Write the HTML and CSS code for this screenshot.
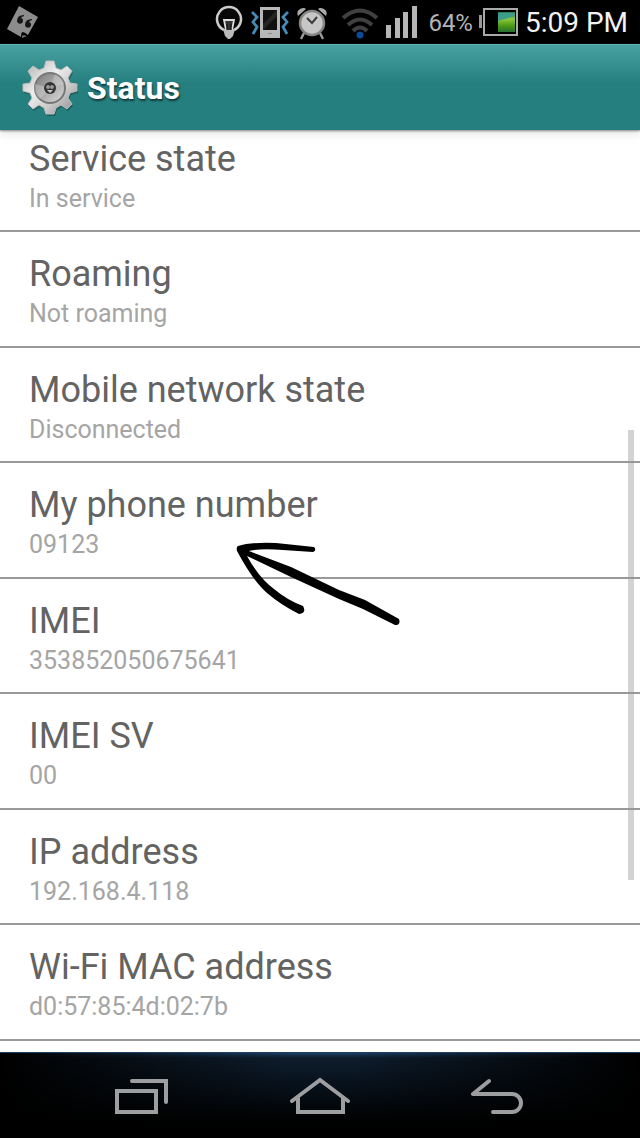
FILE: index.html
```html
<!DOCTYPE html>
<html lang="en">
<head>
<meta charset="utf-8">
<meta name="viewport" content="width=device-width, initial-scale=1">
<title>Status</title>
<link rel="stylesheet" href="styles.css">
</head>
<body>
<div class="statusbar">
  <svg class="note" width="32" height="34" viewBox="0 0 32 34" aria-hidden="true">
    <path d="M12 1 31 12 21 30Q18 27 15 27 14 29 14 32L0 24Z" fill="#8c8c8c"/>
    <path d="M15 33Q14 29 20 31Z" fill="#777"/>
    <path d="M17 10q-7 0-7 6a3 3 0 1 0 4-3q0-1 3-2ZM25 14q-7 0-7 6a3 3 0 1 0 4-3q0-1 3-2Z" fill="#161616"/>
  </svg>
  <div class="indicators">
    <svg width="28" height="36" viewBox="0 0 28 36" aria-label="Light" role="img">
      <path d="M9 26A12 12 0 1 1 19 26" fill="#080808" stroke="#ccc" stroke-width="2.500"/>
      <path d="M8 25H20L18 32 15 35H13L10 32Z" fill="#bbb"/>
      <path d="M11 26 9 16H19L17 26" fill="#333" stroke="#ddd" stroke-width="1.800"/>
      <path d="M12 20v6M16 20v6" stroke="#111" stroke-width="1"/>
    </svg>
    <svg width="38" height="36" viewBox="0 0 38 36" aria-label="Vibrate" role="img">
      <rect x="9" y="3" width="20" height="31" fill="#b8b8b8"/>
      <rect x="12" y="6" width="14" height="20" fill="#101010"/>
      <path d="M12 26V20L26 6V12Z" fill="#252525"/>
      <rect x="17" y="29" width="4" height="1" fill="#888"/>
      <path d="M1 8 6 13 2 18 6 23 2 30M37 8 32 13 36 18 32 23 36 30" fill="none" stroke="#438bb8" stroke-width="2.800"/>
    </svg>
    <svg width="30" height="36" viewBox="0 0 30 36" aria-label="Alarm" role="img">
      <path d="M7 29 4 35M23 29 26 35" stroke="#999" stroke-width="2.500"/>
      <path d="M1 12Q-1 7 3 5T9 5ZM29 12Q31 7 27 5T21 5Z" fill="#aaa"/>
      <circle cx="15" cy="19" r="12" fill="#c6c6c6" stroke="#858585" stroke-width="2.500"/>
      <path d="M10 14 15 19 20 13" fill="none" stroke="#3b3b3b" stroke-width="2"/>
    </svg>
    <svg class="wifi" width="36" height="36" viewBox="0 0 36 36" aria-label="Wi-Fi" role="img">
      <path d="M1 14Q18-1 35 14M6 21Q18 10 30 21M11 27Q18 20 25 27" fill="none" stroke="#404040" stroke-width="4"/>
      <circle cx="18" cy="31" r="3.500" fill="#0b4c98"/>
    </svg>
    <svg class="signal" width="32" height="36" viewBox="0 0 32 36" aria-label="Signal" role="img">
      <path d="M0 21h5v13H0ZM9 14h5v20H9ZM17 8h5v26h-5ZM26 2h5v32h-5Z" fill="#b6b6b6"/>
    </svg>
    <span class="percent">64%</span>
    <svg class="battery" width="40" height="30" viewBox="0 0 40 30" aria-label="Battery" role="img">
      <defs><linearGradient id="charge" x1="0" y1="0" x2="0" y2="1"><stop offset="0" stop-color="#247c4c"/><stop offset=".35" stop-color="#8ac83e"/><stop offset=".7" stop-color="#4b9713"/><stop offset="1" stop-color="#267132"/></linearGradient></defs>
      <rect x="0" y="8" width="3" height="13" fill="#999"/>
      <rect x="5" y="2" width="33" height="26" fill="#000" stroke="#aaa" stroke-width="2"/>
      <rect x="19" y="5" width="17" height="20" fill="url(#charge)"/>
      <path d="M19 6H36V9L19 14Z" fill="#3c9d8c"/>
    </svg>
    <time class="clock">5:09 PM</time>
  </div>
</div>

<header class="appbar">
  <svg width="58" height="58" viewBox="0 0 58 58" aria-hidden="true">
    <defs>
      <linearGradient id="metal" x1="0" y1="0" x2="1" y2="1"><stop offset="0" stop-color="#aaa"/><stop offset=".4" stop-color="#eee"/><stop offset=".65" stop-color="#ccc"/><stop offset="1" stop-color="#888"/></linearGradient>
      <linearGradient id="dish" x1="0" y1="0" x2="1" y2="1"><stop offset="0" stop-color="#777"/><stop offset=".5" stop-color="#aaa"/><stop offset="1" stop-color="#ddd"/></linearGradient>
      <path id="gear" d="M25 2H33L35 9 40 11 46 7 51 12 47 19 49 24 56 25V32L49 34 47 39 51 45 46 50 40 46 35 49 33 55H25L23 49 18 46 12 50 7 45 11 39 9 34 2 32V25L9 24 11 19 7 12 12 7 18 11 23 9Z"/>
    </defs>
    <use href="#gear" x="1" y="2" fill="#17494a" opacity=".6"/>
    <use href="#gear" fill="url(#metal)" stroke="#bbb"/>
    <circle cx="29" cy="29" r="15" fill="url(#dish)" stroke="#777" stroke-width="2"/>
    <path d="M29 29 14 25A15 15 0 0 0 19 40ZM29 29 43 25A15 15 0 0 0 34 15Z" fill="#ddd" opacity=".35"/>
    <circle cx="29" cy="29" r="6" fill="#333"/>
    <circle cx="27" cy="28" r="2" fill="#999"/><circle cx="31" cy="28" r="2" fill="#999"/>
    <path d="M26 31h6l-3 3Z" fill="#ccc"/>
  </svg>
  <h1>Status</h1>
</header>

<main class="screen">
  <ul class="list">
    <li class="row"><h2>Service state</h2><p>In service</p></li>
    <li class="row"><h2>Roaming</h2><p>Not roaming</p></li>
    <li class="row"><h2>Mobile network state</h2><p>Disconnected</p></li>
    <li class="row"><h2>My phone number</h2><p>09123</p>
      <svg class="arrow" width="172" height="90" viewBox="0 0 172 90" aria-hidden="true">
        <path d="M7 7Q20 3 45 4L83 8Q86 11 82 13L52 11Q25 9 14 13L18 12 60 28 108 51 134 61 168 80Q170 86 164 86L132 70 108 60 60 38 16 17Q28 39 43 50 56 61 72 67 76 74 68 75 50 66 36 54 22 42 6 12 5 8 7 7Z" fill="#000"/>
      </svg>
    </li>
    <li class="row"><h2>IMEI</h2><p>353852050675641</p></li>
    <li class="row"><h2>IMEI SV</h2><p>00</p></li>
    <li class="row"><h2>IP address</h2><p>192.168.4.118</p></li>
    <li class="row"><h2>Wi-Fi MAC address</h2><p>d0:57:85:4d:02:7b</p></li>
  </ul>
  <div class="scrollbar"></div>
</main>

<nav class="navbar">
  <button type="button" aria-label="Recent apps">
    <svg width="60" height="40" viewBox="0 0 60 40"><path d="M5 15H44V36H5ZM20 5H54V26" fill="none" stroke="#9c9ea0" stroke-width="4" stroke-linecap="round"/></svg>
  </button>
  <button type="button" aria-label="Home">
    <svg width="60" height="40" viewBox="0 0 60 40"><path d="M2 25 30 4 58 25M8 22V36H53V22" fill="none" stroke="#9c9ea0" stroke-width="4" stroke-linecap="round"/></svg>
  </button>
  <button type="button" aria-label="Back">
    <svg width="60" height="40" viewBox="0 0 60 40"><path d="M21 5 5 18H44A9 9 0 0 1 44 36H25" fill="none" stroke="#9c9ea0" stroke-width="4" stroke-linecap="round" stroke-linejoin="round"/></svg>
  </button>
</nav>
</body>
</html>
```

FILE: styles.css
```css
* { box-sizing: border-box; }
body {
  margin: 0;
  height: 100vh;
  display: flex;
  flex-direction: column;
  background: #fff;
  font-family: Roboto, "Noto Sans", sans-serif;
}
h1, h2, p, ul { margin: 0; padding: 0; font-weight: 400; }
svg { display: block; flex: none; }

.statusbar {
  flex: none;
  height: 44px;
  padding: 0 12px 0 7px;
  display: flex;
  align-items: center;
  justify-content: space-between;
  background: #000;
}
.indicators { display: flex; align-items: center; gap: 8px; }
.wifi { margin-left: 7px; }
.signal { margin-right: 2px; }
.percent { color: #b4b4b4; font-size: 24px; line-height: 44px; padding-top: 2px; }
.battery { margin: 0 -2px; }
.clock { color: #f2f2f2; font-size: 28px; line-height: 44px; padding-top: 2px; }

.appbar {
  flex: none;
  height: 86px;
  padding: 0 21px;
  display: flex;
  align-items: center;
  gap: 8px;
  border-top: 1px solid #5fb5b5;
  background: linear-gradient(#48a0a0, #267f7f 45%, #267f7f);
  box-shadow: 0 1px 2px #888, 0 2px 12px rgba(0, 0, 0, .15);
  z-index: 1;
}
.appbar h1 {
  color: #fff;
  font-size: 32px;
  font-weight: 700;
  line-height: 40px;
  text-shadow: 1px 2px 2px rgba(0, 0, 0, .55);
}

.screen { flex: 1; min-height: 0; position: relative; overflow: hidden; }
.list { list-style: none; }
.row {
  position: relative;
  padding: 18px 29px 15px;
  border-bottom: 2px solid #999;
}
.row:first-child { padding-top: 5px; }
.row:nth-child(even) { padding-bottom: 16px; }
.row h2 { color: #636363; font-size: 36px; line-height: 48px; }
.row p { color: #a5a5a5; font-size: 25px; line-height: 32px; }
.arrow { position: absolute; left: 231px; top: 76px; z-index: 1; }
.scrollbar {
  position: absolute;
  right: 6px;
  top: 300px;
  width: 6px;
  height: 450px;
  background: rgba(150, 150, 150, .42);
}

.navbar {
  flex: none;
  height: 86px;
  padding: 0 53px;
  display: flex;
  border-top: 1px solid #204060;
  background:
    linear-gradient(90deg, #000, transparent 45%, transparent 55%, #000),
    linear-gradient(#193e63, #0e1d2d 5px, #07101a 40%, #010203 75%, #000);
}
.navbar button {
  flex: 1;
  display: flex;
  align-items: center;
  justify-content: center;
  padding: 0;
  border: 0;
  background: none;
}
```
